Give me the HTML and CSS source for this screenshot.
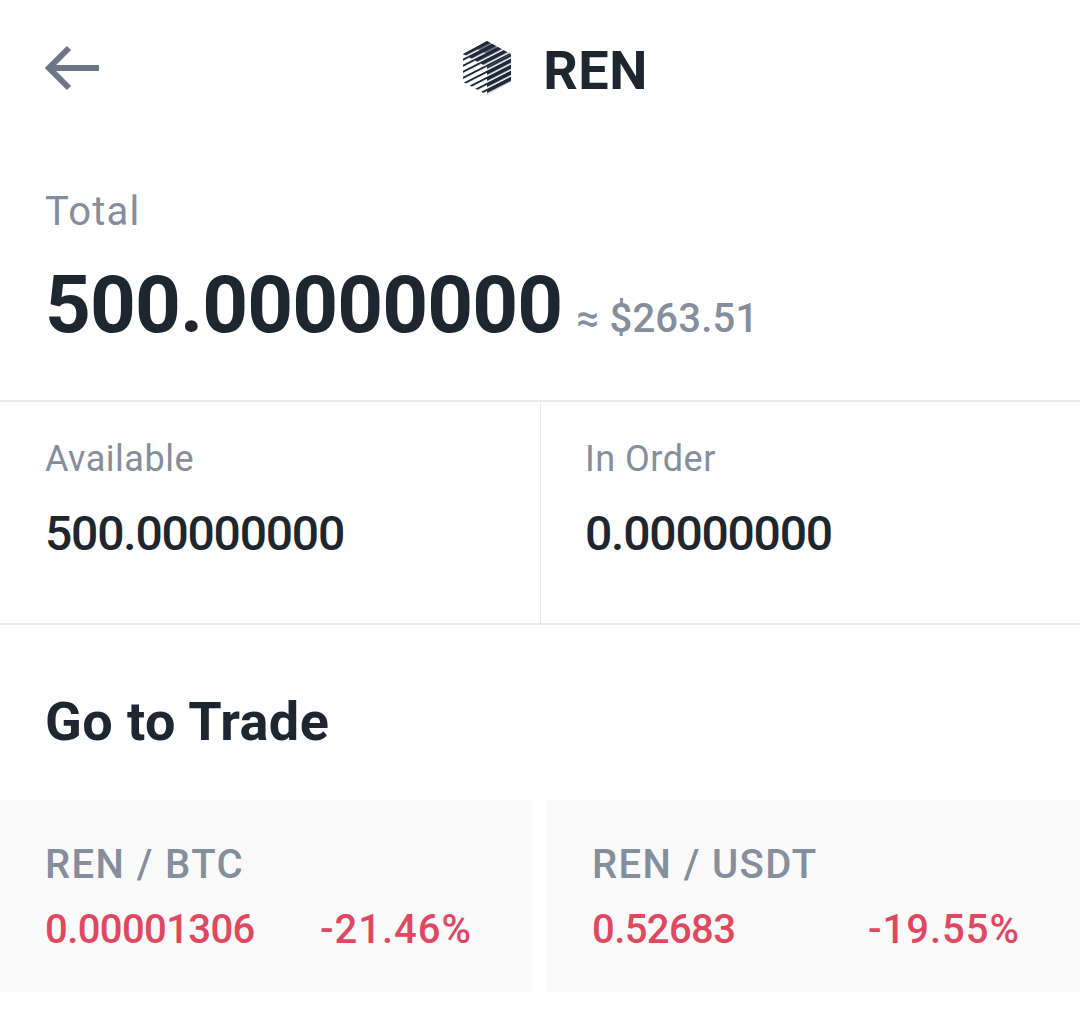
FILE: index.html
```html
<!DOCTYPE html>
<html lang="en">
<head>
  <meta charset="UTF-8">
  <meta name="viewport" content="width=device-width, initial-scale=1.0">
  <title>REN</title>
  <link rel="stylesheet" href="styles.css">
</head>
<body>
  <header class="topbar">
    <svg class="back" width="56" height="46" viewBox="0 0 56 46">
      <path d="M54 23H4M24 3L4 23l20 20" fill="none" stroke="#6c7686" stroke-width="6"/>
    </svg>
    <div class="coin">
      <svg class="logo" width="50" height="54" viewBox="0 0 50 54">
        <defs>
          <pattern id="thick" width="5.4" height="5.4" patternUnits="userSpaceOnUse" patternTransform="rotate(-27)">
            <rect width="5.4" height="3.9" fill="#1e2a3a"/>
          </pattern>
          <pattern id="thin" width="5.4" height="5.4" patternUnits="userSpaceOnUse" patternTransform="rotate(-27)">
            <rect width="5.4" height="1.9" fill="#1e2a3a"/>
          </pattern>
        </defs>
        <path d="M1 13V41L25 54V26Z" fill="url(#thin)"/>
        <path d="M25 54L49 41V13L25 26Z" fill="url(#thick)"/>
        <path d="M25 0L49 13L25 26L1 13Z" fill="url(#thick)"/>
        <path d="M13 7L25 0L37 7L25 13Z" fill="#1e2a3a" opacity="0.6"/>
      </svg>
      <span class="coin-name">REN</span>
    </div>
  </header>

  <section class="total">
    <div class="total-label">Total</div>
    <div class="total-row">
      <span class="total-value">500.00000000</span>
      <span class="total-usd">≈ $263.51</span>
    </div>
  </section>

  <section class="balances">
    <div class="balance">
      <div class="balance-label">Available</div>
      <div class="balance-value">500.00000000</div>
    </div>
    <div class="balance">
      <div class="balance-label">In Order</div>
      <div class="balance-value">0.00000000</div>
    </div>
  </section>

  <h2 class="trade-title">Go to Trade</h2>

  <section class="pairs">
    <div class="pair">
      <div class="pair-name">REN / BTC</div>
      <div class="pair-row">
        <span class="pair-price">0.00001306</span>
        <span class="pair-change">-21.46%</span>
      </div>
    </div>
    <div class="pair">
      <div class="pair-name">REN / USDT</div>
      <div class="pair-row">
        <span class="pair-price">0.52683</span>
        <span class="pair-change">-19.55%</span>
      </div>
    </div>
  </section>
</body>
</html>
```

FILE: styles.css
```css
body {
  margin: 0;
  background: #fff;
  font-family: Roboto, "Liberation Sans", sans-serif;
  color: #1e2630;
}
.topbar {
  height: 140px;
  display: flex;
  justify-content: center;
  align-items: center;
  position: relative;
}
.back {
  position: absolute;
  left: 45px;
  top: 45px;
}
.coin {
  display: flex;
  align-items: center;
  gap: 31px;
  margin-left: 30px;
}
.logo {
  margin-top: -4px;
}
.coin-name {
  font-size: 54px;
  font-weight: 700;
  letter-spacing: 0.5px;
}
.total {
  height: 260px;
  padding: 0 45px;
  box-sizing: border-box;
}
.total-label {
  font-size: 40px;
  line-height: 48px;
  padding-top: 48px;
  letter-spacing: 1.2px;
  color: #858e9c;
}
.total-row {
  display: flex;
  align-items: baseline;
  gap: 14px;
  margin-top: 22px;
}
.total-value {
  font-size: 80px;
  line-height: 94px;
  font-weight: 700;
  letter-spacing: -0.9px;
}
.total-usd {
  font-size: 40px;
  font-weight: 500;
  color: #858e9c;
  letter-spacing: 0.2px;
}
.balances {
  display: grid;
  grid-template-columns: 540px 1fr;
  height: 225px;
  box-sizing: border-box;
  border-top: 2px solid #e9eaec;
  border-bottom: 2px solid #e9eaec;
}
.balance {
  padding: 36px 0 0 45px;
}
.balance + .balance {
  border-left: 1px solid #e9eaec;
  padding-left: 44px;
}
.balance-label {
  font-size: 36px;
  line-height: 42px;
  letter-spacing: 0.5px;
  color: #858e9c;
}
.balance-value {
  font-size: 48px;
  line-height: 56px;
  font-weight: 500;
  letter-spacing: -1.2px;
  margin-top: 26px;
}
.trade-title {
  margin: 0;
  padding: 66px 45px 0;
  height: 109px;
  font-size: 54px;
  line-height: 62px;
  font-weight: 700;
  letter-spacing: 0.4px;
}
.pairs {
  display: grid;
  grid-template-columns: 532px 1fr;
  gap: 15px;
}
.pair {
  height: 192px;
  box-sizing: border-box;
  background: #fafafb;
  padding: 41px 46px 0 45px;
}
.pair-name {
  font-size: 40px;
  line-height: 48px;
  font-weight: 500;
  letter-spacing: 1.4px;
  color: #858e9c;
}
.pair-row {
  display: flex;
  justify-content: space-between;
  margin-top: 17px;
  padding-right: 14px;
  font-size: 40px;
  line-height: 48px;
  font-weight: 500;
  color: #e0485f;
}
.pair-price {
  letter-spacing: -0.6px;
}
.pair-change {
  letter-spacing: 1px;
}
```
